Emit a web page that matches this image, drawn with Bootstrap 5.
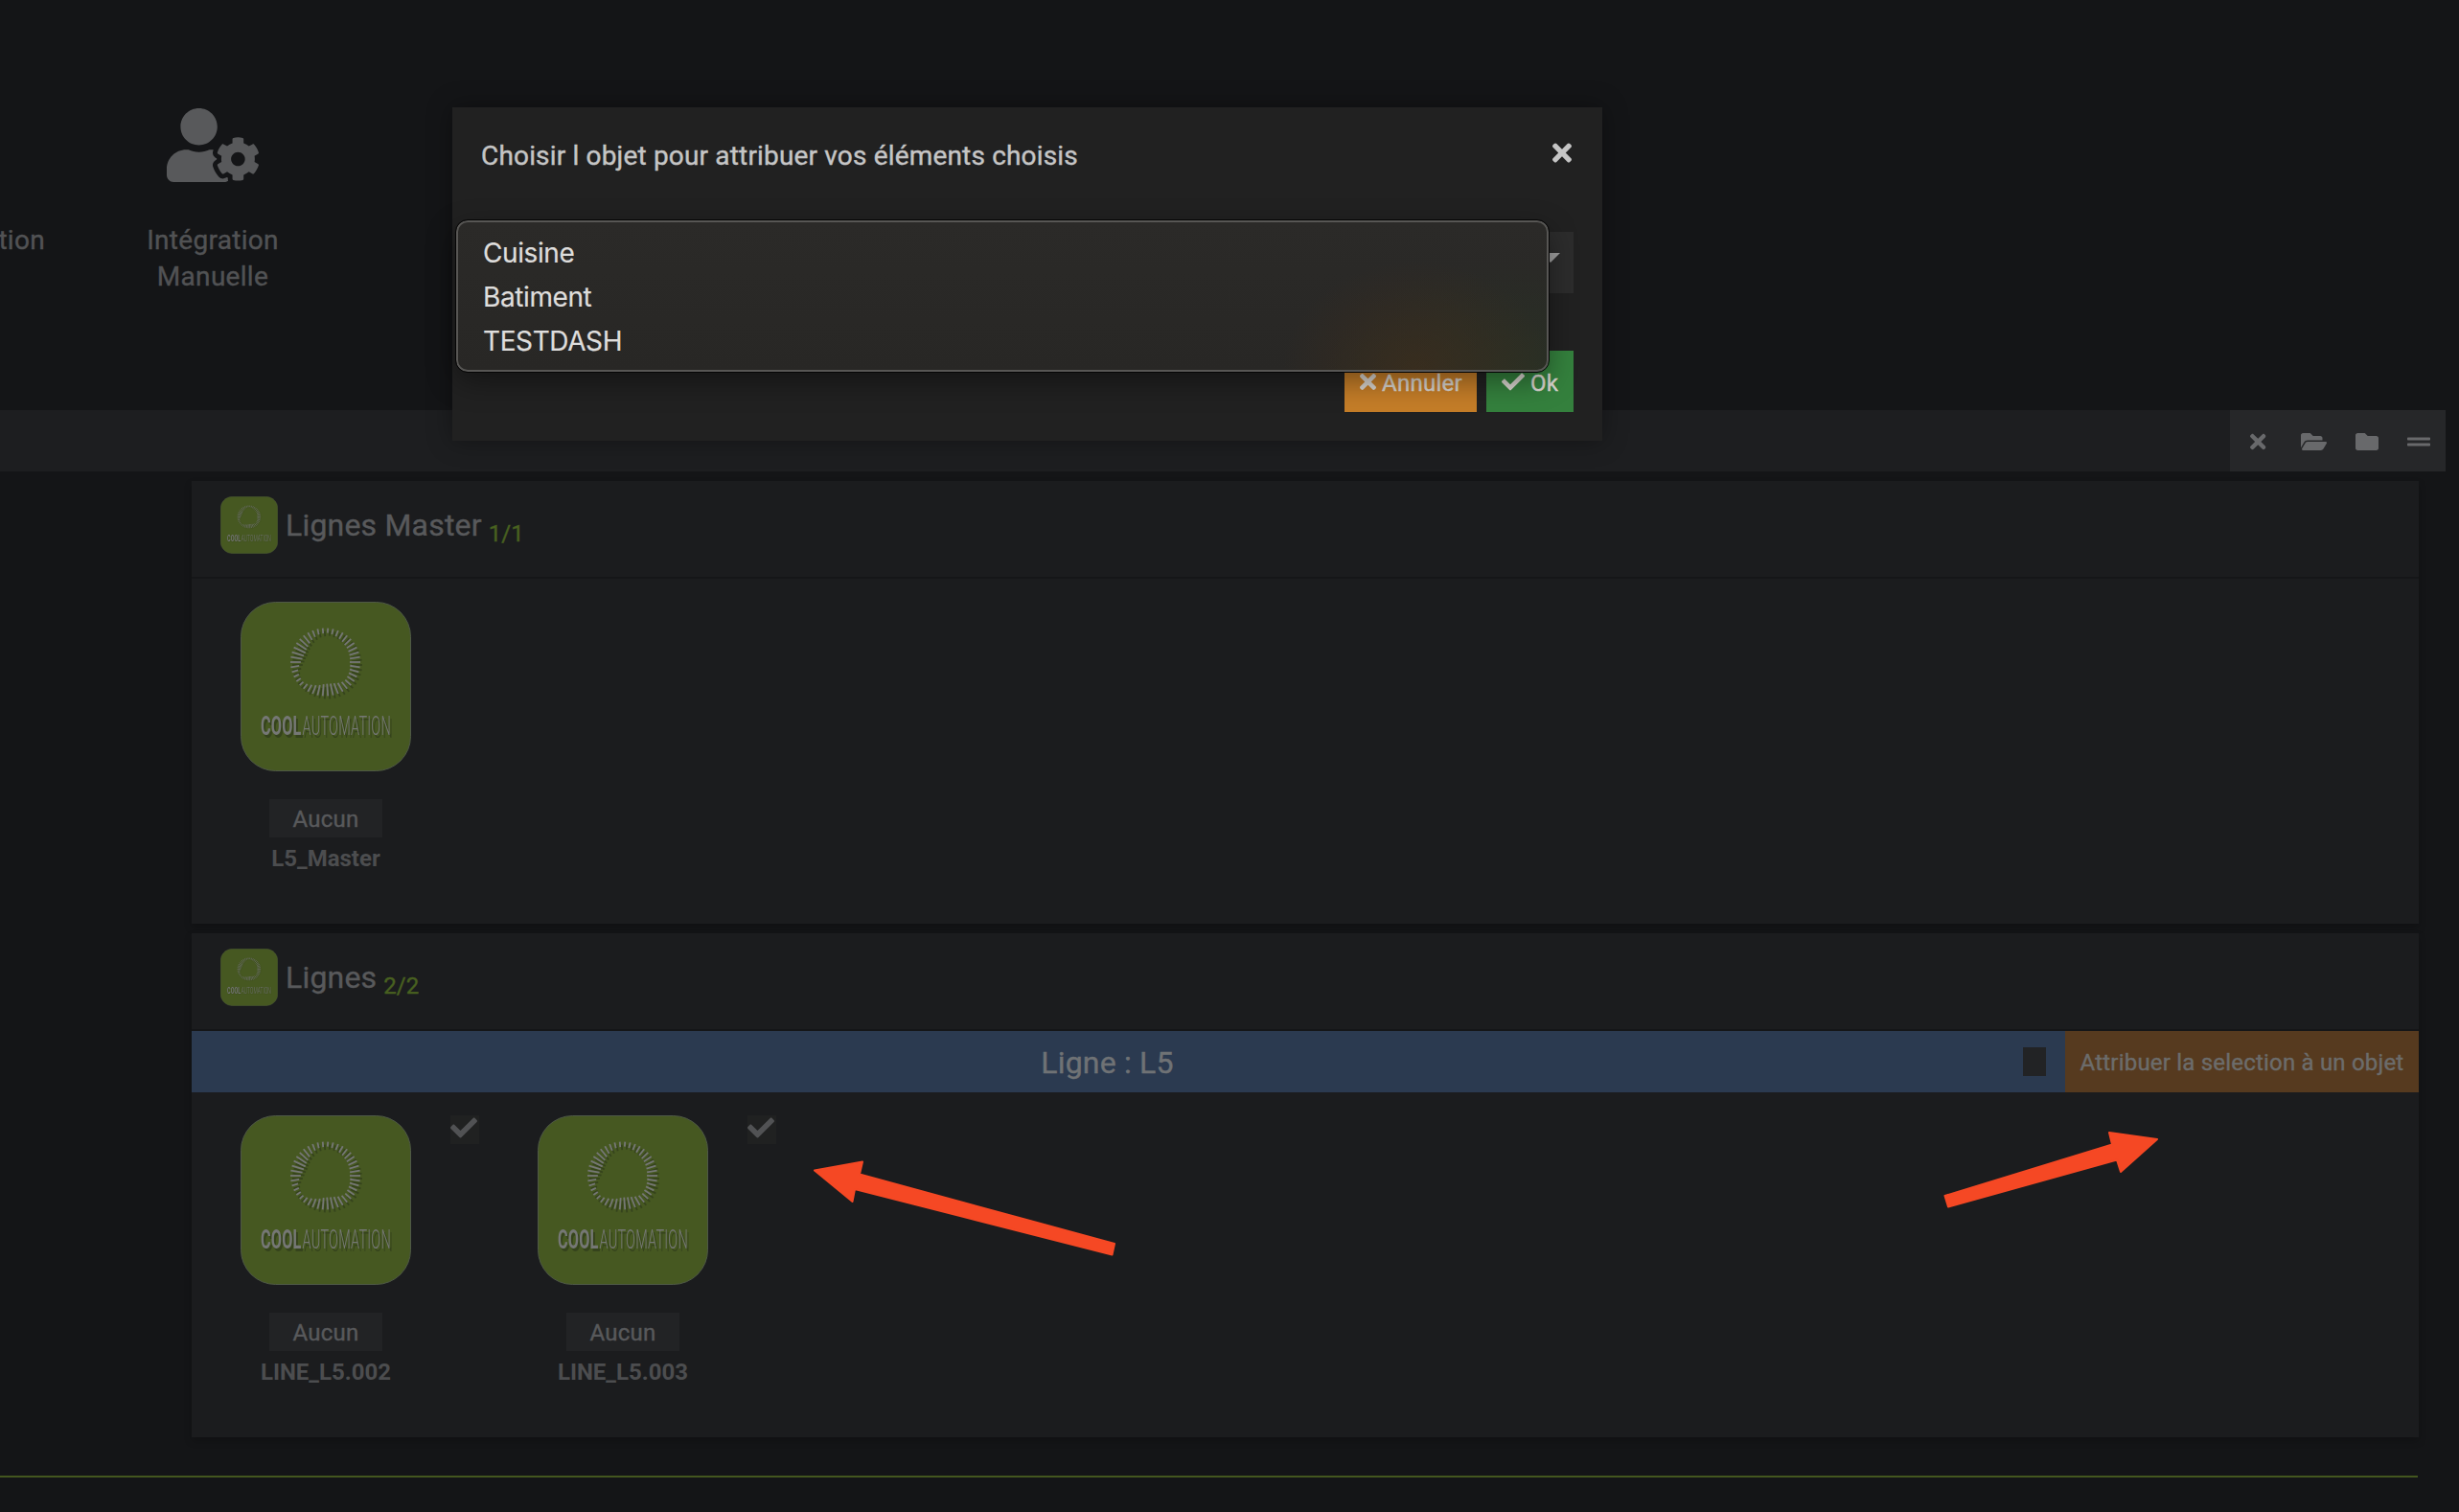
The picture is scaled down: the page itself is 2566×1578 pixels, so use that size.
<!DOCTYPE html>
<html lang="fr">
<head>
<meta charset="utf-8">
<title>CoolAutomation</title>
<link href="https://cdn.jsdelivr.net/npm/bootstrap@5.3.0/dist/css/bootstrap.min.css" rel="stylesheet">
<style>
body{background:#141517;font-family:Roboto,"Liberation Sans",sans-serif;color:#58595b;width:2566px;height:1578px;overflow:hidden;position:relative;-webkit-text-stroke:.4px currentColor}
svg{display:block;fill:currentColor;flex:none;-webkit-text-stroke:0}
.actions{height:428px;padding-top:113px;color:#515254;font-size:28px;line-height:38px;letter-spacing:.3px}
.action-prev{width:47px;height:38px;margin-top:119px}
.action-tile{width:200px;margin-left:75px}
.action-tile svg{margin-bottom:42px;color:#58595b}
.toolbar{height:64px;margin-right:14px;background:#1d1e20}
.tools{width:225px;background:#262729;color:#68696b;padding:2px 16px 0 21px}
.icon-gap{margin-right:30px}
.panel{margin:10px 42px 0 200px;background:#1b1c1e;box-shadow:0 4px 8px rgba(0,0,0,.2)}
.panel-a{height:462px}
.panel-b{height:526px}
.panel-head{height:102px;padding:16px 30px 24px;border-bottom:2px solid #151618;font-size:32px;line-height:61px;letter-spacing:.2px;color:#58595b}
.panel-head .ttl{margin-left:8px}
.panel-head .cnt{margin-left:7px;font-size:24px;letter-spacing:0;color:#486020;padding-top:9px}
.devices{padding:24px 0 0 51px}
.device{width:310px}
.device-body{width:178px}
.aucun{width:118px;height:40px;margin-top:29px;background:#222325;font-size:24px;line-height:43px;letter-spacing:.2px;text-align:center}
.nom{font-size:24px;line-height:28px;margin-top:8px;font-weight:700;color:#4c4d4f;white-space:nowrap;-webkit-text-stroke:0}
.tick{width:30px;height:30px;background:#202121;margin-left:41px;color:#515254}
.tick svg{margin-top:-1px}
.line-bar{height:64px;background:#2b3a50;font-size:32px;line-height:66px;letter-spacing:.2px;color:#6f7275}
.line-ttl{width:1911px;height:64px;text-align:center}
.box{width:24px;height:30px;background:#222325;margin-right:20px}
.assign{width:369px;height:64px;padding-top:2px;background:#563a1f;font-size:24px;letter-spacing:.2px;color:#6c6c6b}
.rule{height:2px;margin:40px 43px 0 0;background:#43561f}
.dialog{position:absolute;left:472px;top:112px;width:1200px;height:348px;background:#212121;box-shadow:0 0 24px rgba(0,0,0,.35);color:#c5c5c5;padding:30px;z-index:5}
.dialog-ttl{font-size:28px;line-height:41px;letter-spacing:.17px}
.dialog-x{margin:3px 2px 0 0}
.pick{height:64px;background:#2c2c2c;margin-top:59px;padding:22px 14px}
.caret{border:10px solid transparent;border-top-color:#9d9d9d;border-bottom:0}
.acts{gap:10px;margin-top:60px}
.act{height:64px;font-size:24px;line-height:50px;padding:9px 0 0 16px;gap:6px;letter-spacing:.25px;color:#d8d4ce}
.act-no{width:138px;background:#c47d28}
.act-ok{width:91px;background:#34803d}
.menu{position:absolute;left:4px;top:118px;width:1140px;height:158px;border:2px solid #575654;outline:1px solid #050505;border-radius:12px;box-shadow:0 10px 30px rgba(0,0,0,.4);background:radial-gradient(ellipse 140px 115px at 1000px 155px,rgba(66,46,26,.6),transparent),radial-gradient(ellipse 230px 130px at 1125px 165px,rgba(42,52,36,.7),transparent),linear-gradient(#2b2a28,#282725);padding:9px 0 0 26px;font:28px/46px Inter,"Liberation Sans",sans-serif;letter-spacing:-.4px;color:#dedddc;-webkit-text-stroke:.2px}
.pointers{position:absolute;left:0;top:0;z-index:6;pointer-events:none;color:#f54824}
.engraved{filter:drop-shadow(2.5px 3px 0 #35431c)}
.logo-sm .engraved{filter:drop-shadow(1px 1px 0 #35431c)}
</style>
<script src="https://cdn.jsdelivr.net/npm/bootstrap@5.3.0/dist/js/bootstrap.bundle.min.js"></script>
</head>
<body>
<svg width="0" height="0" class="position-absolute">
<symbol id="times" viewBox="0 0 352 512"><path d="M242.72 256l100.07-100.07c12.28-12.28 12.28-32.19 0-44.48l-22.24-22.24c-12.28-12.28-32.19-12.28-44.48 0L176 189.28 75.93 89.21c-12.28-12.28-32.19-12.28-44.48 0L9.21 111.45c-12.28 12.28-12.28 32.19 0 44.48L109.28 256 9.21 356.07c-12.28 12.28-12.28 32.19 0 44.48l22.24 22.24c12.28 12.28 32.2 12.28 44.48 0L176 322.72l100.07 100.07c12.28 12.28 32.2 12.28 44.48 0l22.24-22.24c12.28-12.28 12.28-32.19 0-44.48L242.72 256z"/></symbol>
<symbol id="check" viewBox="0 0 512 512"><path d="M173.898 439.404l-166.4-166.4c-9.997-9.997-9.997-26.206 0-36.204l36.203-36.204c9.997-9.998 26.207-9.998 36.204 0L192 312.69 432.095 72.596c9.997-9.997 26.207-9.997 36.204 0l36.203 36.204c9.997 9.997 9.997 26.206 0 36.204l-294.4 294.401c-9.998 9.997-26.207 9.997-36.204-.001z"/></symbol>
</svg>

<header class="actions d-flex">
<div class="action-prev d-flex justify-content-end">tion</div>
<div class="action-tile d-flex flex-column align-items-center text-center">
<svg width="96" height="77" viewBox="0 0 640 512"><path d="M610.5 373.3c2.6-14.1 2.6-28.5 0-42.6l25.8-14.9c3-1.7 4.3-5.2 3.3-8.5-6.7-21.6-18.2-41.2-33.2-57.4-2.3-2.5-6-3.1-9-1.4l-25.8 14.9c-10.9-9.3-23.4-16.5-36.9-21.3v-29.8c0-3.4-2.4-6.4-5.7-7.1-22.3-5-45-4.8-66.2 0-3.3.7-5.7 3.7-5.7 7.1v29.8c-13.5 4.8-26 12-36.9 21.3l-25.8-14.9c-2.9-1.7-6.7-1.1-9 1.4-15 16.2-26.5 35.8-33.2 57.4-1 3.3.4 6.8 3.3 8.5l25.8 14.9c-2.6 14.1-2.6 28.5 0 42.6l-25.8 14.9c-3 1.7-4.3 5.2-3.3 8.5 6.7 21.6 18.2 41.1 33.2 57.4 2.3 2.5 6 3.1 9 1.4l25.8-14.9c10.9 9.3 23.4 16.5 36.9 21.3v29.8c0 3.4 2.4 6.4 5.7 7.1 22.3 5 45 4.8 66.2 0 3.3-.7 5.7-3.7 5.7-7.1v-29.8c13.5-4.8 26-12 36.9-21.3l25.8 14.9c2.9 1.7 6.7 1.1 9-1.4 15-16.2 26.5-35.8 33.2-57.4 1-3.3-.4-6.8-3.3-8.5l-25.8-14.9zM496 400.5c-26.8 0-48.5-21.8-48.5-48.5s21.8-48.5 48.5-48.5 48.5 21.8 48.5 48.5-21.7 48.5-48.5 48.5zM224 256c70.7 0 128-57.3 128-128S294.7 0 224 0 96 57.3 96 128s57.3 128 128 128zm201.2 226.5c-2.3-1.2-4.6-2.6-6.8-3.9l-7.9 4.6c-6 3.4-12.8 5.3-19.6 5.3-10.9 0-21.4-4.6-28.9-12.6-18.3-19.8-32.3-43.9-40.2-69.6-5.5-17.7 1.9-36.4 17.9-45.7l7.9-4.6c-.1-2.6-.1-5.2 0-7.8l-7.9-4.6c-16-9.2-23.4-28-17.9-45.7.9-2.9 2.2-5.8 3.2-8.7-3.8-.3-7.5-1.2-11.4-1.2h-16.7c-22.2 10.2-46.9 16-72.9 16s-50.6-5.8-72.9-16h-16.7C60.2 288 0 348.2 0 422.4V464c0 26.5 21.5 48 48 48h352c10.1 0 19.5-3.2 27.2-8.5-1.2-3.8-2-7.7-2-11.8v-9.2z"/></svg>
<span>Intégration</span><span>Manuelle</span>
</div>
</header>

<div class="toolbar d-flex justify-content-end">
<div class="tools d-flex align-items-center">
<svg width="16.5" height="24" class="me-auto"><use href="#times"/></svg>
<svg width="27" height="24" viewBox="0 0 576 512" class="icon-gap"><path d="M572.694 292.093L500.27 416.248A63.997 63.997 0 0 1 444.989 448H45.025c-18.523 0-30.064-20.093-20.731-36.093l72.424-124.155A64 64 0 0 1 152 256h399.964c18.523 0 30.064 20.093 20.73 36.093zM152 224h328v-48c0-26.51-21.49-48-48-48H272l-64-64H48C21.49 64 0 85.49 0 112v278.046l69.077-118.418C86.214 242.25 117.989 224 152 224z"/></svg>
<svg width="24" height="24" viewBox="0 0 512 512" class="icon-gap"><path d="M464 128H272l-64-64H48C21.49 64 0 85.49 0 112v288c0 26.51 21.49 48 48 48h416c26.51 0 48-21.49 48-48V176c0-26.51-21.49-48-48-48z"/></svg>
<svg width="24" height="24" viewBox="0 0 512 512"><path d="M496 288H16c-8.8 0-16 7.2-16 16v32c0 8.8 7.2 16 16 16h480c8.8 0 16-7.2 16-16v-32c0-8.8-7.2-16-16-16zm0-128H16c-8.8 0-16 7.2-16 16v32c0 8.8 7.2 16 16 16h480c8.8 0 16-7.2 16-16v-32c0-8.8-7.2-16-16-16z"/></svg>
</div>
</div>

<section class="panel panel-a">
<div class="panel-head d-flex"><svg class="logo logo-sm" width="60" height="60" viewBox="0 0 178 177"></svg><span class="ttl">Lignes Master</span><span class="cnt">1/1</span></div>
<div class="devices d-flex">
<div class="device d-flex"><div class="device-body d-flex flex-column align-items-center"><svg class="logo" width="178" height="177" viewBox="0 0 178 177"></svg><div class="aucun">Aucun</div><div class="nom">L5_Master</div></div></div>
</div>
</section>

<section class="panel panel-b">
<div class="panel-head d-flex"><svg class="logo logo-sm" width="60" height="60" viewBox="0 0 178 177"></svg><span class="ttl">Lignes</span><span class="cnt">2/2</span></div>
<div class="line-bar d-flex align-items-center"><div class="line-ttl">Ligne : L5</div><div class="box"></div><div class="assign d-flex align-items-center justify-content-center">Attribuer la selection à un objet</div></div>
<div class="devices d-flex">
<div class="device d-flex"><div class="device-body d-flex flex-column align-items-center"><svg class="logo" width="178" height="177" viewBox="0 0 178 177"></svg><div class="aucun">Aucun</div><div class="nom">LINE_L5.002</div></div><div class="tick"><svg width="28" height="28"><use href="#check"/></svg></div></div>
<div class="device d-flex"><div class="device-body d-flex flex-column align-items-center"><svg class="logo" width="178" height="177" viewBox="0 0 178 177"></svg><div class="aucun">Aucun</div><div class="nom">LINE_L5.003</div></div><div class="tick"><svg width="28" height="28"><use href="#check"/></svg></div></div>
</div>
</section>
<div class="rule"></div>

<div class="dialog">
<div class="d-flex justify-content-between"><span class="dialog-ttl">Choisir l objet pour attribuer vos éléments choisis</span><svg class="dialog-x" width="20" height="29"><use href="#times"/></svg></div>
<div class="pick d-flex justify-content-end"><span class="caret"></span></div>
<div class="acts d-flex justify-content-end">
<div class="act act-no d-flex"><svg width="17" height="47"><use href="#times"/></svg><span>Annuler</span></div>
<div class="act act-ok d-flex"><svg width="24" height="47"><use href="#check"/></svg><span>Ok</span></div>
</div>
<div class="menu"><div>Cuisine</div><div>Batiment</div><div>TESTDASH</div></div>
</div>

<svg class="pointers" width="2566" height="1578" stroke="currentColor" stroke-width="2" stroke-linejoin="round">
<path d="M850 1221.500L900 1212.500L897 1225.500L1163 1298L1160.500 1309.500L892 1241L889.500 1254Z"/>
<path d="M2251 1189L2201 1182L2204 1194.500L2029.500 1248L2033 1259.500L2209 1210.500L2213 1223Z"/>
</svg>
<script>
// Logo: ring of rays whose length varies with the angle, over the two-weight wordmark
const stops=[[0,11],[45,8],[70,12],[90,13],[115,9],[135,5],[160,6],[172,9],[185,12],[205,13.5],[225,11.5],[242,8.500],[256,6],[275,5],[315,9],[360,11]];
const RAYS=42;
let ring='';
for(let i=0;i<RAYS;i++){
  const a=i*360/RAYS;let k=1;while(stops[k][0]<a)k++;
  const [a0,l0]=stops[k-1],[a1,l1]=stops[k],l=l0+(l1-l0)*(a-a0)/(a1-a0),c=Math.cos(a*Math.PI/180),s=Math.sin(a*Math.PI/180);
  ring+=`<line x1="${88.5+36.5*c}" y1="${63+35.5*s}" x2="${88.5+(36.5-l)*c}" y2="${63+(35.5-l)*s}"/>`;
}
document.querySelectorAll('.logo').forEach(el=>{
  el.innerHTML='<rect x=".5" y=".5" width="177" height="176" rx="36" fill="#465821" stroke="#4e5846"/>'+
  '<g class="engraved" fill="#757775"><g stroke="#757775" stroke-width="1.8">'+ring+'</g>'+
  '<g font-family="Roboto, sans-serif" font-size="28"><g transform="translate(21 139) scale(.58 1)"><text font-weight="700" textLength="73">COOL</text></g>'+
  '<g transform="translate(64.500 139) scale(.518 1)"><text font-weight="300" textLength="178">AUTOMATION</text></g></g></g>';
});
</script>
</body>
</html>
